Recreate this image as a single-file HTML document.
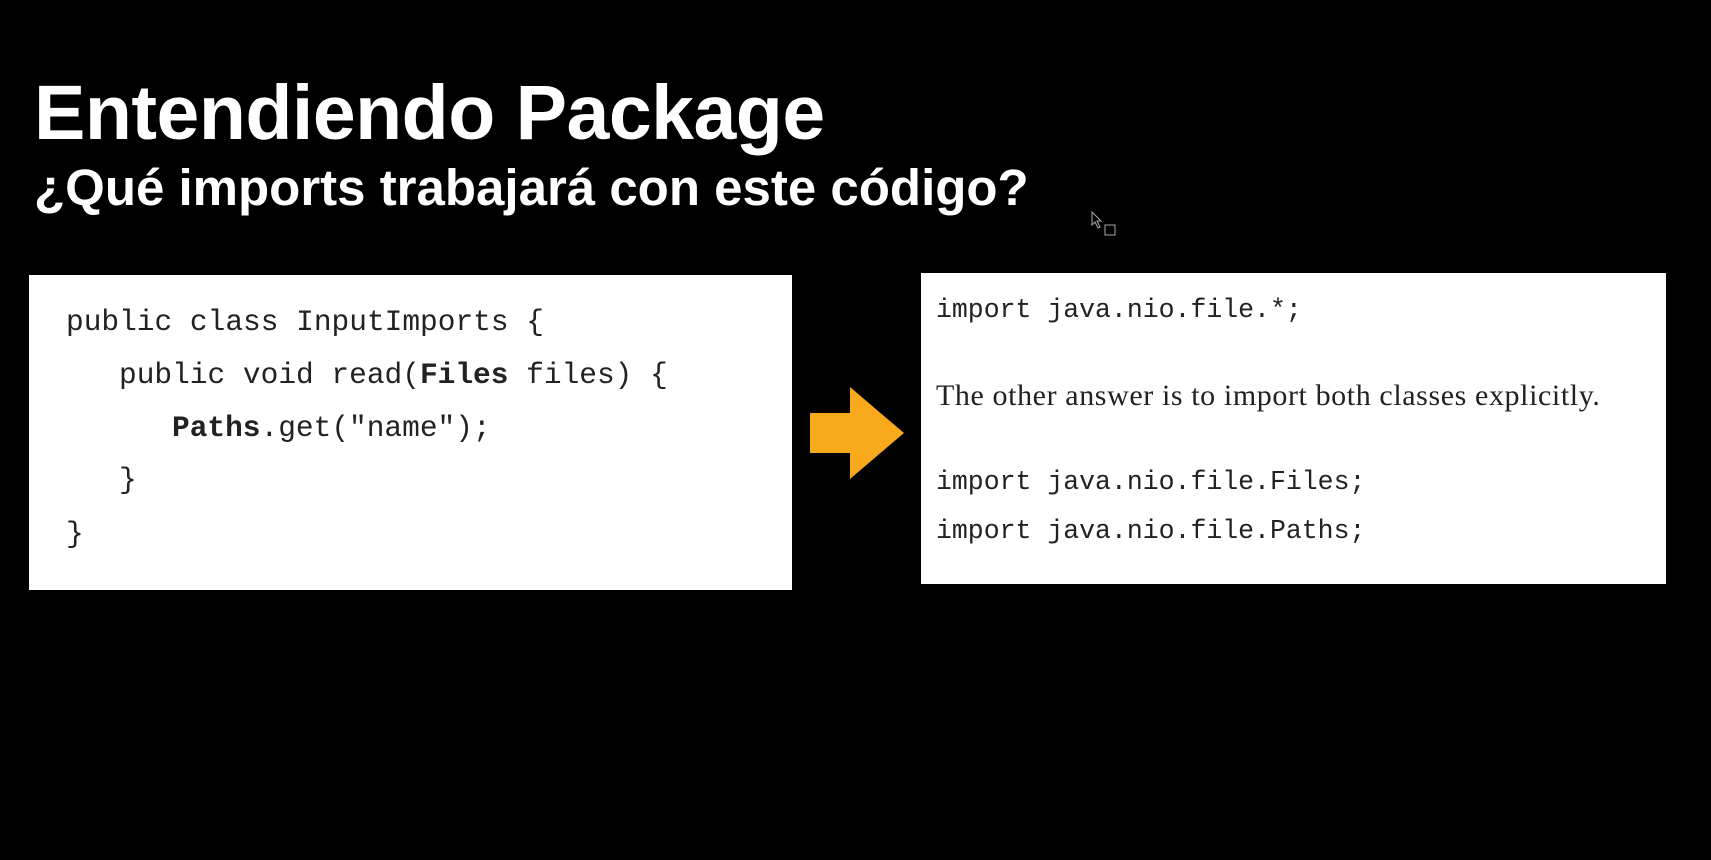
<!DOCTYPE html>
<html><head><meta charset="utf-8"><style>
body{margin:0;width:1711px;height:860px;background:#000;overflow:hidden;position:relative;font-family:"Liberation Sans",sans-serif}
.t{position:absolute;color:#fff;font-weight:bold;white-space:nowrap}
.box{position:absolute;background:#fff}
.c{position:absolute;font-family:"Liberation Mono",monospace;color:#222;white-space:pre;line-height:1}
.s{position:absolute;font-family:"Liberation Serif",serif;color:#222;white-space:nowrap;line-height:1}
</style></head><body>
<div class="t" style="left:34px;top:69px;font-size:77px;letter-spacing:-0.5px">Entendiendo Package</div>
<div class="t" style="left:34px;top:158px;font-size:51px">¿Qué imports trabajará con este código?</div>
<div class="box" style="left:29px;top:275px;width:763px;height:315px"></div>
<div class="c" style="left:66px;top:308px;font-size:29.5px">public class InputImports {</div>
<div class="c" style="left:119px;top:361px;font-size:29.5px">public void read(<b>Files</b> files) {</div>
<div class="c" style="left:172px;top:414px;font-size:29.5px"><b>Paths</b>.get("name");</div>
<div class="c" style="left:119px;top:466px;font-size:29.5px">}</div>
<div class="c" style="left:66px;top:520px;font-size:29.5px">}</div>
<svg style="position:absolute;left:810px;top:387px" width="94" height="92"><polygon points="0,26 40,26 40,0 94,46 40,92 40,66 0,66" fill="#f9a91c"/></svg>
<div class="box" style="left:921px;top:273px;width:745px;height:311px"></div>
<div class="c" style="left:936px;top:297px;font-size:26.5px">import java.nio.file.*;</div>
<div class="s" style="left:936px;top:381px;font-size:30px;letter-spacing:0.6px">The other answer is to import both classes explicitly.</div>
<div class="c" style="left:936px;top:469px;font-size:26.5px">import java.nio.file.Files;</div>
<div class="c" style="left:936px;top:518px;font-size:26.5px">import java.nio.file.Paths;</div>
<svg style="position:absolute;left:1091px;top:211px" width="28" height="26"><polygon points="1,1 1,14 4,11 7,17 9,16 6,10 10,10" fill="#000" stroke="#aaa" stroke-width="1"/><rect x="14" y="14" width="10" height="10" fill="none" stroke="#aaa"/></svg>
</body></html>
